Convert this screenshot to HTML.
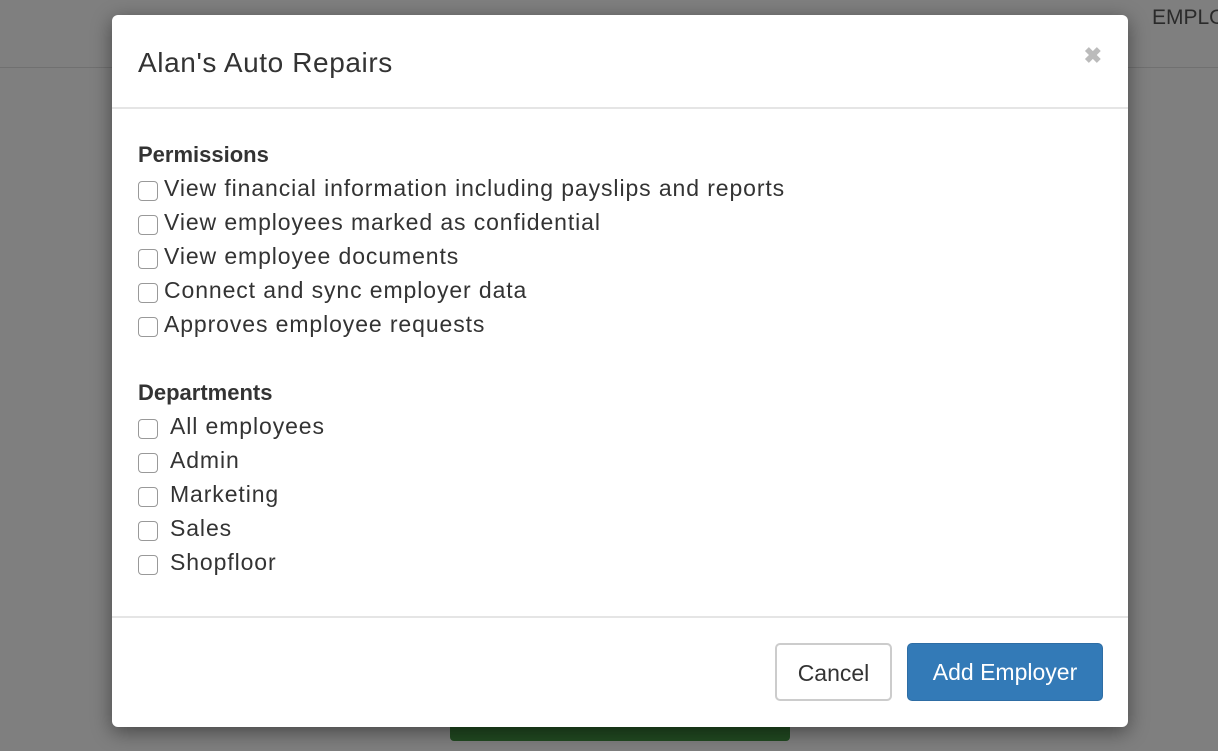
<!DOCTYPE html>
<html><head><style>
body{margin:0;width:1218px;height:751px;background:#7f7f7f;font-family:"Liberation Sans",sans-serif;position:relative;overflow:hidden;color:#333}
.topline{position:absolute;left:0;right:0;top:67px;height:1px;background:#707070}
.emp{position:absolute;left:1152px;top:6px;font-size:21px;color:#2a2a2a}
.green{position:absolute;left:450px;top:700px;width:340px;height:41px;background:#214a21;border-radius:4px}
.modal{position:absolute;left:112px;top:15px;width:1016px;height:712px;background:#fff;border-radius:6px;box-shadow:0 5px 20px rgba(0,0,0,.45)}
.title{position:absolute;left:26px;top:32px;font-size:28px;letter-spacing:0.6px;color:#333}
.x{position:absolute;right:26px;top:28px;font-size:22px;color:#bbb;font-weight:bold}
.hr{position:absolute;left:0;right:0;height:2px;background:#e5e5e5}
h4{position:absolute;left:26px;margin:0;font-size:22px;font-weight:bold;color:#333}
.row{position:absolute;left:26px;font-size:23px;letter-spacing:0.9px;height:34px;line-height:34px;white-space:nowrap}
.cb{display:inline-block;width:20px;height:20px;border:1px solid #999;border-radius:4px;vertical-align:-5px;margin-right:6px;box-sizing:border-box;background:#fff}
.d .cb{margin-right:12px}
.btn{position:absolute;top:628px;height:58px;border-radius:5px;font-size:23px;line-height:56px;text-align:center;box-sizing:border-box}
</style></head><body>
<div class="topline"></div>
<div class="emp">EMPLO</div>
<div class="green"></div>
<div class="modal">
<div class="title">Alan's Auto Repairs</div>
<div class="x">✖</div>
<div class="hr" style="top:92px"></div>
<h4 style="top:127px">Permissions</h4>
<div class="row" style="top:156px"><span class="cb"></span>View financial information including payslips and reports</div>
<div class="row" style="top:190px"><span class="cb"></span>View employees marked as confidential</div>
<div class="row" style="top:224px"><span class="cb"></span>View employee documents</div>
<div class="row" style="top:258px"><span class="cb"></span>Connect and sync employer data</div>
<div class="row" style="top:292px"><span class="cb"></span>Approves employee requests</div>
<h4 style="top:365px">Departments</h4>
<div class="row d" style="top:394px"><span class="cb"></span>All employees</div>
<div class="row d" style="top:428px"><span class="cb"></span>Admin</div>
<div class="row d" style="top:462px"><span class="cb"></span>Marketing</div>
<div class="row d" style="top:496px"><span class="cb"></span>Sales</div>
<div class="row d" style="top:530px"><span class="cb"></span>Shopfloor</div>
<div class="hr" style="top:601px"></div>
<div class="btn" style="left:663px;width:117px;border:2px solid #ccc;color:#333;background:#fff">Cancel</div>
<div class="btn" style="left:795px;width:196px;background:#337ab7;border:1px solid #2e6da4;color:#fff">Add Employer</div>
</div>
</body></html>
